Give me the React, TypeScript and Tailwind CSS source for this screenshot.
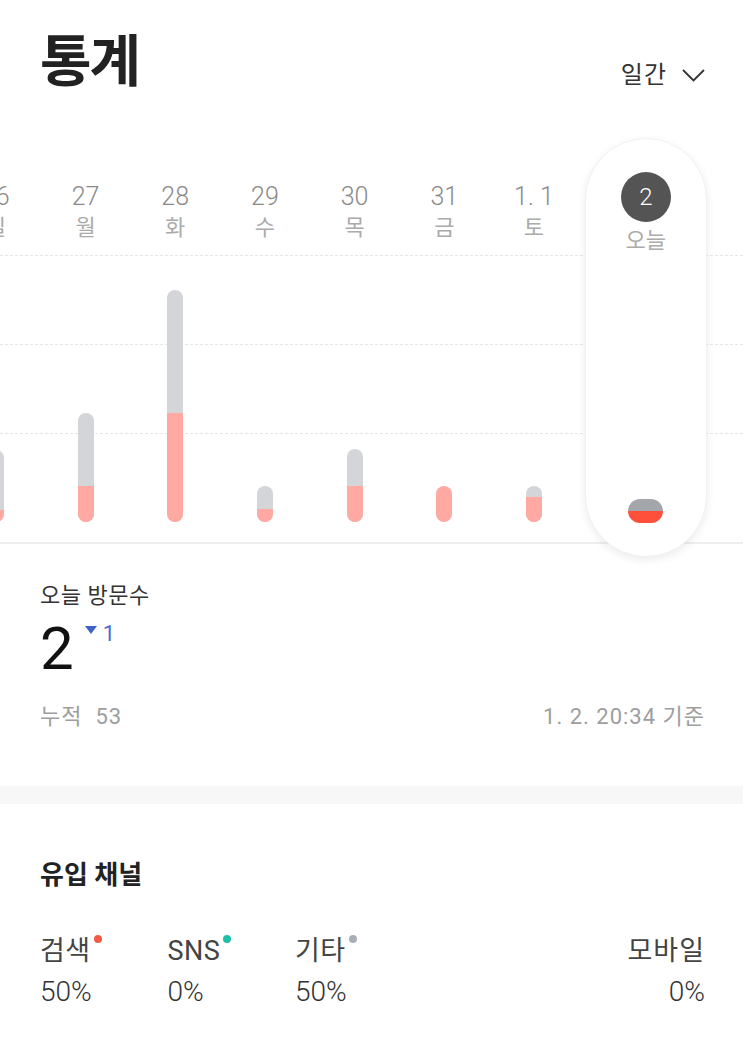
import React from 'react'

// Daily visits (pixel heights of the stacked bars)
const days = [
  { d: '26', w: '일', total: 72, red: 12 },
  { d: '27', w: '월', total: 109, red: 36 },
  { d: '28', w: '화', total: 232, red: 109 },
  { d: '29', w: '수', total: 36, red: 13 },
  { d: '30', w: '목', total: 73, red: 36 },
  { d: '31', w: '금', total: 36, red: 36 },
  { d: '1. 1', w: '토', total: 36, red: 25 },
]

const channels = [
  { name: '검색', value: '50%', dot: 'bg-[#f25a45]' },
  { name: 'SNS', value: '0%', dot: 'bg-[#1cbfa8]' },
  { name: '기타', value: '50%', dot: 'bg-[#a9afb7]' },
]

function Bar({ total, red }: { total: number; red: number }) {
  return (
    <div className="w-4 rounded-full overflow-hidden bg-[#d4d5d9] flex flex-col justify-end" style={{ height: total }}>
      <div className="w-full bg-[#ffa9a2]" style={{ height: red }} />
    </div>
  )
}

export default function App() {
  return (
    <div className='min-h-screen bg-white font-[Roboto,"Noto_Sans_CJK_KR",sans-serif] overflow-hidden'>
      {/* Header */}
      <div className="h-[138px] flex justify-between pl-[40px] pr-[38px]">
        <h1 className="pt-[30px] text-[56px] leading-[64px] font-bold text-[#222] tracking-[-2px]">통계</h1>
        <button className="pt-[58px] h-fit flex items-center gap-[15px] text-[24px] leading-[34px] text-[#333] tracking-[1px]">
          <span>일간</span>
          <svg width="23" height="13" viewBox="0 0 23 13" fill="none">
            <polyline points="1,1 11.5,11.5 22,1" stroke="#333" strokeWidth="1.8" />
          </svg>
        </button>
      </div>

      {/* Chart */}
      <div className="relative h-[419px]">
        <div className="absolute left-0 right-0 top-[117px] border-t border-dashed border-[#e6e6e6]" />
        <div className="absolute left-0 right-0 top-[206px] border-t border-dashed border-[#e6e6e6]" />
        <div className="absolute left-0 right-0 top-[295px] border-t border-dashed border-[#e6e6e6]" />
        <div className="absolute left-0 right-0 top-[404px] h-[2px] bg-[#eeeeee]" />

        <div className="relative flex h-full ml-[-49px]">
          {days.map((day) => (
            <div key={day.d} className="w-[89.7px] shrink-0 h-full flex flex-col items-center pt-[45px] pb-[35px]">
              <span className="text-[25px] leading-[28px] font-light text-[#8a8a8a] whitespace-nowrap">{day.d}</span>
              <span className="mt-[3px] text-[22px] leading-[28px] text-[#ababab]">{day.w}</span>
              <div className="flex-1 flex items-end">
                <Bar total={day.total} red={day.red} />
              </div>
            </div>
          ))}

          <div className="ml-[6px] w-[122px] shrink-0 h-full rounded-full bg-white border border-[#f1f1f1] shadow-[0_3px_8px_rgba(0,0,0,0.08)] flex flex-col items-center pt-[33px] pb-[33px]">
            <div className="w-[50px] h-[50px] rounded-full bg-[#545454] flex items-center justify-center text-white text-[24px] font-light">2</div>
            <span className="mt-[5px] text-[22px] leading-[28px] text-[#ababab]">오늘</span>
            <div className="flex-1 flex items-end">
              <div className="w-[35px] h-[24px] rounded-full overflow-hidden flex flex-col">
                <div className="h-[12px] bg-[#a3a6ab]" />
                <div className="flex-1 bg-[#ff503c]" />
              </div>
            </div>
          </div>
        </div>
      </div>

      {/* Today visits */}
      <div className="pl-[40px] pr-[38px] pt-[24px]">
        <p className="text-[22px] leading-[30px] text-[#333] tracking-[0.5px]">오늘 방문수</p>
        <div className="mt-[8px] flex items-start">
          <span className="text-[60px] leading-[60px] text-[#111]">2</span>
          <span className="ml-[11px] mt-[7px] w-0 h-0 border-l-[6px] border-r-[6px] border-t-[8px] border-l-transparent border-r-transparent border-t-[#3d63c9]" />
          <span className="ml-[6px] mt-[4px] text-[22px] leading-[22px] text-[#4a6fd0]">1</span>
        </div>
        <div className="mt-[23px] flex justify-between text-[22px] leading-[30px] text-[#9e9e9e] tracking-[1px]">
          <span>누적 &nbsp;53</span>
          <span>1. 2. 20:34 기준</span>
        </div>
      </div>

      <div className="mt-[54px] h-[18px] bg-[#f7f7f7]" />

      {/* Channels */}
      <div className="pl-[40px] pr-[38px] pt-[54px]">
        <h2 className="text-[26px] leading-[34px] font-semibold text-[#222]">유입 채널</h2>
        <div className="mt-[42px] flex">
          {channels.map((c) => (
            <div key={c.name} className="w-[127.5px] flex flex-col">
              <div className="flex items-start">
                <span className="text-[27px] leading-[34px] text-[#444] tracking-[0.5px]">{c.name}</span>
                <span className={`ml-[3px] mt-[1px] w-[8px] h-[8px] rounded-full ${c.dot}`} />
              </div>
              <span className="mt-[7px] text-[28px] leading-[34px] font-light text-[#333]">{c.value}</span>
            </div>
          ))}
          <div className="ml-auto flex flex-col items-end">
            <span className="text-[27px] leading-[34px] text-[#444] tracking-[1px]">모바일</span>
            <span className="mt-[7px] text-[28px] leading-[34px] font-light text-[#333]">0%</span>
          </div>
        </div>
      </div>
    </div>
  )
}
